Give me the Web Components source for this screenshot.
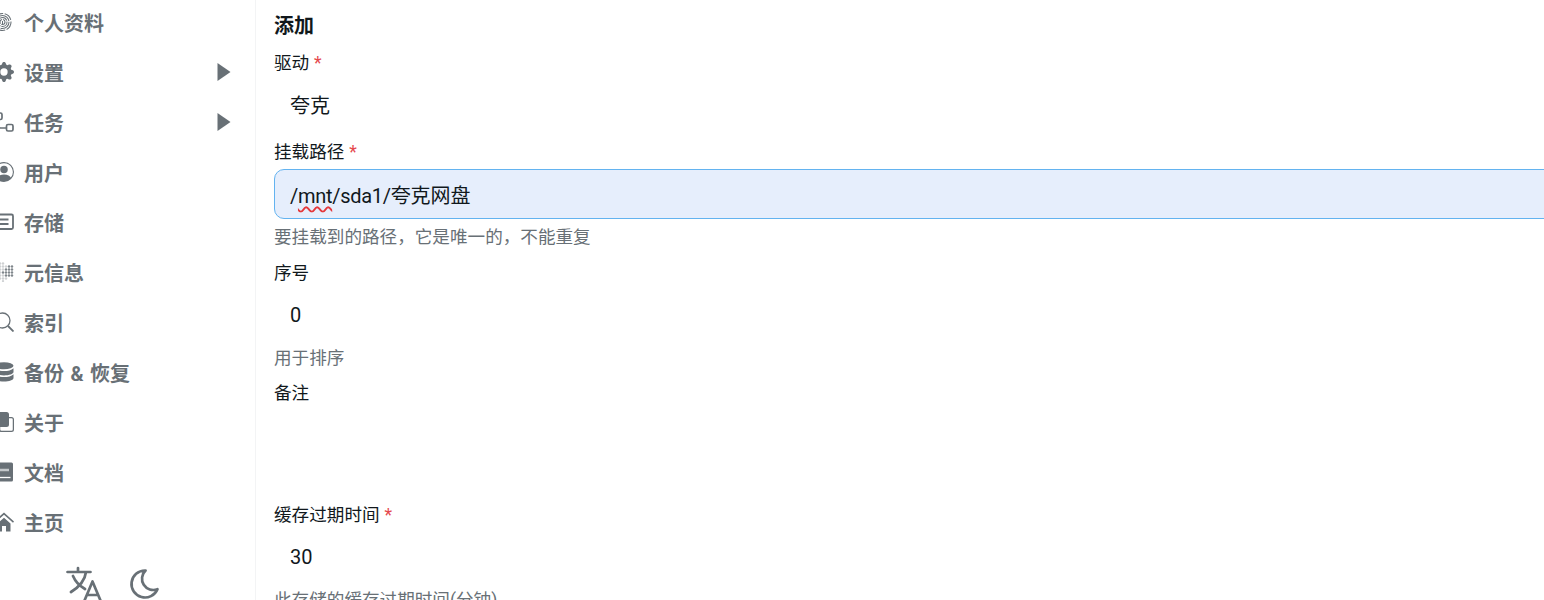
<!DOCTYPE html>
<html lang="zh">
<head>
<meta charset="utf-8">
<title>添加</title>
<style>
    html, body { margin: 0; height: 600px; overflow: hidden; background: #fff; }
    body { font-family: Roboto, "Noto Sans CJK SC", sans-serif; color: #11181c; }
</style>
</head>
<body>
<app-shell>
    <side-nav slot="side">
        <nav-item label="个人资料">
            <svg slot="icon" viewBox="0 0 20 20" fill="none" stroke="currentColor" stroke-width="1.050"><circle cx="8.500" cy="10" r="8.500" stroke-dasharray="9 1.500"/><circle cx="8.500" cy="10" r="6.500" stroke-dasharray="12 1.500"/><circle cx="8.500" cy="10" r="4.500" stroke-dasharray="8 1"/><circle cx="8.500" cy="10" r="2.500" stroke-dasharray="5 1"/><path d="M8.500 9v3"/></svg>
        </nav-item>
        <nav-item label="设置" arrow>
            <svg slot="icon" viewBox="0 0 16 16" fill="currentColor"><path d="M9.405 1.05c-.413-1.4-2.397-1.4-2.81 0l-.1.34a1.464 1.464 0 0 1-2.105.872l-.31-.17c-1.283-.698-2.686.705-1.987 1.987l.169.311c.446.82.023 1.841-.872 2.105l-.34.1c-1.4.413-1.4 2.397 0 2.81l.34.1a1.464 1.464 0 0 1 .872 2.105l-.17.31c-.698 1.283.705 2.686 1.987 1.987l.311-.169a1.464 1.464 0 0 1 2.105.872l.1.34c.413 1.4 2.397 1.4 2.81 0l.1-.34a1.464 1.464 0 0 1 2.105-.872l.31.17c1.283.698 2.686-.705 1.987-1.987l-.169-.311a1.464 1.464 0 0 1 .872-2.105l.34-.1c1.4-.413 1.4-2.397 0-2.81l-.34-.1a1.464 1.464 0 0 1-.872-2.105l.17-.31c.698-1.283-.705-2.686-1.987-1.987l-.311.169a1.464 1.464 0 0 1-2.105-.872l-.1-.34zM8 10.93a2.929 2.929 0 1 1 0-5.86 2.929 2.929 0 0 1 0 5.858z"/></svg>
        </nav-item>
        <nav-item label="任务" arrow>
            <svg slot="icon" viewBox="0 0 20 20" fill="none" stroke="currentColor" stroke-width="1.700"><rect x="1.500" y="1" width="6.500" height="6.500" rx="1.500"/><rect x="12.500" y="12.500" width="6.500" height="6.500" rx="1.500"/><path d="M4.500 7.500v6a2.500 2.500 0 0 0 2.500 2.500h5.500"/></svg>
        </nav-item>
        <nav-item label="用户">
            <svg slot="icon" viewBox="0 0 16 16" fill="currentColor"><path d="M11 6a3 3 0 1 1-6 0 3 3 0 0 1 6 0z"/><path fill-rule="evenodd" d="M0 8a8 8 0 1 1 16 0A8 8 0 0 1 0 8zm8-7a7 7 0 0 0-5.468 11.370C3.242 11.226 4.805 10 8 10s4.757 1.225 5.468 2.370A7 7 0 0 0 8 1z"/></svg>
        </nav-item>
        <nav-item label="存储">
            <svg slot="icon" viewBox="0 0 20 20" fill="none" stroke="currentColor" stroke-width="1.800"><rect x="1" y="2.500" width="18" height="14.500" rx="1.500"/><path d="M4 7.500h10.500M4 12h10.500"/></svg>
        </nav-item>
        <nav-item label="元信息">
            <svg slot="icon" viewBox="0 0 20 20" fill="currentColor"><g opacity=".32"><circle cx="6" cy="1.500" r="1.200"/><circle cx="9" cy="1.500" r="1.200"/><circle cx="6" cy="4.500" r="1.200"/><circle cx="9" cy="4.500" r="1.200"/><circle cx="12" cy="4.500" r="1.200"/><circle cx="6" cy="7.500" r="1.200"/><circle cx="9" cy="7.500" r="1.200"/><circle cx="6" cy="10.500" r="1.200"/><circle cx="6" cy="13.500" r="1.200"/><circle cx="9" cy="13.500" r="1.200"/><circle cx="6" cy="16.500" r="1.200"/><circle cx="9" cy="16.500" r="1.200"/><circle cx="12" cy="16.500" r="1.200"/><circle cx="9" cy="19" r="1.100"/></g><g opacity=".85"><circle cx="9" cy="10.500" r="1.200"/><circle cx="12" cy="7.500" r="1.200"/><circle cx="12" cy="10.500" r="1.200"/><circle cx="12" cy="13.500" r="1.200"/><circle cx="15" cy="4.500" r="1.200"/><circle cx="15" cy="7.500" r="1.200"/><circle cx="15" cy="10.500" r="1.200"/><circle cx="15" cy="13.500" r="1.200"/><circle cx="18" cy="4.500" r="1.200"/><circle cx="18" cy="7.500" r="1.200"/><circle cx="18" cy="10.500" r="1.200"/><circle cx="18" cy="13.500" r="1.200"/></g></svg>
        </nav-item>
        <nav-item label="索引">
            <svg slot="icon" viewBox="0 0 20 20" fill="none" stroke="currentColor" stroke-width="1.300"><circle cx="8.500" cy="8.500" r="7.500"/><path d="M14 14l5.500 5.500" stroke-width="1.800"/></svg>
        </nav-item>
        <nav-item label="备份 &amp; 恢复">
            <svg slot="icon" viewBox="0 0 20 20" fill="currentColor"><ellipse cx="10" cy="3.800" rx="9.500" ry="3.500"/><path d="M.5 6.300C2.500 8.500 6 9.100 10 9.100s7.500-.6 9.500-2.800V10c0 2-4.300 3.400-9.500 3.400S.5 12 .5 10z"/><path d="M.5 12.200C2.500 14.400 6 15 10 15s7.500-.6 9.500-2.800V16c0 2-4.300 3.600-9.500 3.600S.5 18 .5 16z"/></svg>
        </nav-item>
        <nav-item label="关于">
            <svg slot="icon" viewBox="0 0 16 16" fill="currentColor"><path d="M0 2a2 2 0 0 1 2-2h8a2 2 0 0 1 2 2v2h2a2 2 0 0 1 2 2v8a2 2 0 0 1-2 2H6a2 2 0 0 1-2-2v-2H2a2 2 0 0 1-2-2V2zm5 10v2a1 1 0 0 0 1 1h8a1 1 0 0 0 1-1V6a1 1 0 0 0-1-1h-2v5a2 2 0 0 1-2 2H5z"/></svg>
        </nav-item>
        <nav-item label="文档">
            <svg slot="icon" viewBox="0 0 20 20"><rect x="0" y=".5" width="19" height="19" rx="1.500" fill="currentColor"/><path d="M4 15.500h12.500" stroke="#fff" stroke-width="1.300"/><path d="M6 8h9" stroke="#c4c8cb" stroke-width="2.500"/></svg>
        </nav-item>
        <nav-item label="主页">
            <svg slot="icon" viewBox="0 0 20 20" fill="currentColor"><path d="M10 .5 0 9.500l1 1.200L10 2.700l9 8 1-1.200z"/><path d="M3.500 11.500 10 5.700l6.500 5.800V19.500h-4.500v-5.500H8v5.500H3.500z"/></svg>
        </nav-item>
        <side-tools slot="tools"></side-tools>
    </side-nav>
    <form-panel title-text="添加">
        <form-field label="驱动" required value="夸克" style="--box-pad: 2px"></form-field>
        <form-field label="挂载路径" required focused hint="要挂载到的路径，它是唯一的，不能重复">
            <span style="letter-spacing: -.3px">/<span style="text-decoration: underline wavy #e5383b 1.500px; text-underline-offset: 3px; text-decoration-skip-ink: none;">mnt</span>/sda1/<span style="letter-spacing: 0">夸克网盘</span></span>
        </form-field>
        <form-field label="序号" value="0" hint="用于排序"></form-field>
        <form-field label="备注" tall></form-field>
        <form-field label="缓存过期时间" required value="30" hint="此存储的缓存过期时间(分钟)"></form-field>
    </form-panel>
</app-shell>
<script>
    class AppShell extends HTMLElement {
        constructor() {
            super();
            this.attachShadow({ mode: 'open' });
            this.shadowRoot.innerHTML = `
                <style>
                    :host {
                        display: flex;
                        height: 600px;
                        overflow: hidden;
                    }
                </style>
                <slot name="side"></slot>
                <slot></slot>
            `;
        }
    }

    class SideNav extends HTMLElement {
        constructor() {
            super();
            this.attachShadow({ mode: 'open' });
            this.shadowRoot.innerHTML = `
                <style>
                    :host {
                        display: flex;
                        flex-direction: column;
                        flex: none;
                        box-sizing: border-box;
                        width: 282px;
                        height: 600px;
                        margin-left: -26px; /* page is scrolled a little */
                        padding: 0 24px 0 20px;
                        border-right: 1px solid #f3f4f5;
                        overflow: hidden;
                    }
                    #items {
                        display: flex;
                        flex-direction: column;
                        margin-top: -3px;
                    }
                </style>
                <div id="items"><slot></slot></div>
                <slot name="tools"></slot>
            `;
        }
    }

    class NavItem extends HTMLElement {
        constructor() {
            super();
            this.attachShadow({ mode: 'open' });
            this.shadowRoot.innerHTML = `
                <style>
                    :host {
                        display: flex;
                        align-items: center;
                        height: 50px;
                        color: #687076;
                        font-size: 20px;
                        font-weight: 700;
                        word-spacing: 1.500px;
                    }
                    #icon { display: flex; flex: none; width: 20px; height: 20px; margin-right: 10px; }
                    ::slotted(svg) { width: 20px; height: 20px; }
                    #arrow { margin-left: auto; width: 14px; height: 18px; fill: currentColor; }
                </style>
                <span id="icon"><slot name="icon"></slot></span>
                <span id="label"></span>
            `;
            this.shadowRoot.getElementById('label').textContent = this.getAttribute('label');
            if (this.hasAttribute('arrow')) {
                this.shadowRoot.innerHTML += '<svg id="arrow" viewBox="0 0 14 18"><path d="M.5 0 13.500 9 .5 18z"/></svg>';
            }
        }
    }

    class SideTools extends HTMLElement {
        constructor() {
            super();
            this.attachShadow({ mode: 'open' });
            this.shadowRoot.innerHTML = `
                <style>
                    :host {
                        display: flex;
                        justify-content: center;
                        gap: 25px;
                        margin-top: 19px;
                        padding-left: 3px;
                        color: #687076;
                    }
                    svg { flex: none; width: 36px; height: 36px; fill: none; stroke: currentColor; stroke-width: 2.700; stroke-linecap: round; stroke-linejoin: round; }
                </style>
                <svg viewBox="0 0 36 36"><path d="M1.500 6h23M12 2v4M20 6c-1 8-7 15-15 20M7 10c2.500 6 7.500 10.500 12 13M18.500 34.500 26.500 15.500 34.500 34.500M21 29h11"/></svg>
                <svg viewBox="0 0 24 24" style="stroke-width: 1.800"><path d="M12 3c.132 0 .263 0 .393 0a7.500 7.500 0 0 0 7.920 12.446a9 9 0 1 1 -8.313 -12.454z"/></svg>
            `;
        }
    }

    class FormPanel extends HTMLElement {
        constructor() {
            super();
            this.attachShadow({ mode: 'open' });
            this.shadowRoot.innerHTML = `
                <style>
                    :host {
                        display: flex;
                        flex-direction: column;
                        gap: 8px;
                        flex: none;
                        box-sizing: border-box;
                        width: 1400px;
                        padding: 12px 0 0 18px;
                    }
                    h2 { margin: 0; font-size: 20px; line-height: 29px; font-weight: 700; color: #11181c; }
                </style>
                <h2></h2>
                <slot></slot>
            `;
            this.shadowRoot.querySelector('h2').textContent = this.getAttribute('title-text');
        }
    }

    class FormField extends HTMLElement {
        constructor() {
            super();
            this.attachShadow({ mode: 'open' });
            this.shadowRoot.innerHTML = `
                <style>
                    :host {
                        display: flex;
                        flex-direction: column;
                        font-size: 17.600px;
                    }
                    label { line-height: 28px; margin-bottom: 3px; color: #11181c; word-spacing: .5px; }
                    label i { font-style: normal; color: #e5484d; }
                    #box {
                        box-sizing: border-box;
                        display: flex;
                        align-items: center;
                        height: 50px;
                        padding: 0 15px var(--box-pad, 0);
                        border: 1px solid transparent;
                        border-radius: 10px;
                        font-size: 20px;
                        color: #11181c;
                    }
                    :host([focused]) #box { background: #e6eefc; border-color: #63b3f0; }
                    :host([tall]) #box { height: 82.500px; }
                    #hint { margin-top: 5px; line-height: 26.500px; color: #687076; }
                </style>
                <label></label>
                <div id="box"><slot></slot></div>
            `;
            let root = this.shadowRoot;
            root.querySelector('label').textContent = this.getAttribute('label');
            if (this.hasAttribute('required')) {
                root.querySelector('label').insertAdjacentHTML('beforeend', ' <i>*</i>');
            }
            if (this.hasAttribute('value')) {
                root.getElementById('box').append(this.getAttribute('value'));
            }
            if (this.hasAttribute('hint')) {
                let hint = document.createElement('div');
                hint.id = 'hint';
                hint.textContent = this.getAttribute('hint');
                root.append(hint);
            }
        }
    }

    customElements.define('app-shell', AppShell);
    customElements.define('side-nav', SideNav);
    customElements.define('nav-item', NavItem);
    customElements.define('side-tools', SideTools);
    customElements.define('form-panel', FormPanel);
    customElements.define('form-field', FormField);
</script>
</body>
</html>
